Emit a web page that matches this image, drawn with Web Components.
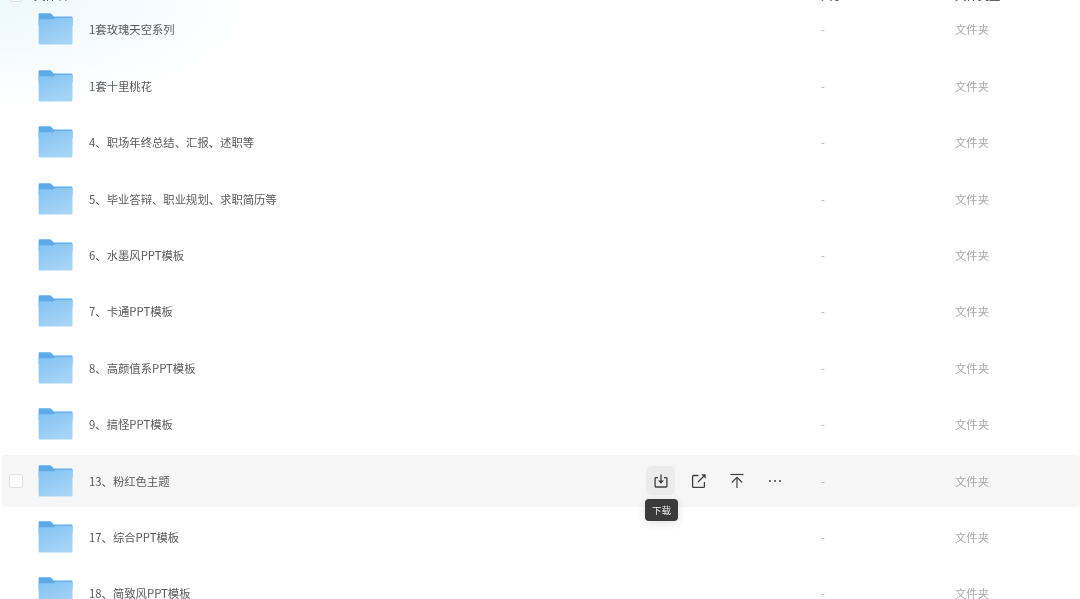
<!DOCTYPE html>
<html lang="zh">
<head>
<meta charset="utf-8">
<title>文件列表</title>
<style>
    html, body { margin: 0; height: 100%; overflow: hidden; background: #fff; }
    body { font-family: "Noto Sans CJK SC", "Noto Sans", sans-serif; }
</style>
</head>
<body>
<file-list>
    <file-row name="1套玫瑰天空系列"></file-row>
    <file-row name="1套十里桃花"></file-row>
    <file-row name="4、职场年终总结、汇报、述职等"></file-row>
    <file-row name="5、毕业答辩、职业规划、求职简历等"></file-row>
    <file-row name="6、水墨风PPT模板"></file-row>
    <file-row name="7、卡通PPT模板"></file-row>
    <file-row name="8、高颜值系PPT模板"></file-row>
    <file-row name="9、搞怪PPT模板"></file-row>
    <file-row name="13、粉红色主题" active></file-row>
    <file-row name="17、综合PPT模板"></file-row>
    <file-row name="18、简致风PPT模板"></file-row>
</file-list>

<script>
const listTemplate = document.createElement('template')
listTemplate.innerHTML = `
<style>
    :host {
        display: block;
        height: 599px;
        overflow: hidden;
        filter: blur(0.4px);
        background:
            radial-gradient(ellipse 260px 110px at 0 0, #eef9fd 0%, #f4fbfe 45%, #fbfdff 75%, #fff 100%);
    }
    .head {
        display: grid;
        grid-template-columns: 34px 787px 134px 1fr;
        align-items: center;
        height: 16px;
        margin-top: -12.6px;
        font-size: 11.35px;
        color: #333;
    }
    .box {
        width: 14px;
        height: 14px;
        margin-left: 9px;
        box-sizing: border-box;
        border: 1px solid #dedede;
        border-radius: 3px;
        background: #fff;
    }
</style>
<div class="head">
    <span class="box"></span>
    <span>文件名</span>
    <span>大小</span>
    <span>文件类型</span>
</div>
<slot></slot>
`

class FileList extends HTMLElement {
    constructor() {
        super()
        this.attachShadow({ mode: 'open' }).appendChild(listTemplate.content.cloneNode(true))
    }
}

const rowTemplate = document.createElement('template')
rowTemplate.innerHTML = `
<style>
    :host {
        display: block;
        height: 56.4px;
        padding-left: 2px;
        box-sizing: border-box;
        font-size: 11.35px;
        color: #5a5a5a;
    }
    .row {
        position: relative;
        display: grid;
        grid-template-columns: 37px 50px 1fr 134px 125px;
        align-items: center;
        height: 52px;
        border-radius: 4px;
    }
    :host([active]) .row { background: #f6f6f6; }
    .check { visibility: hidden; }
    :host([active]) .check {
        visibility: visible;
        width: 14px;
        height: 14px;
        margin-left: 7px;
        box-sizing: border-box;
        border: 1px solid #e3e3e3;
        border-radius: 3px;
        background: #fff;
    }
    svg { display: block; }
    .folder { margin-left: -1px; }
    .name { display: flex; align-items: center; justify-content: space-between; min-width: 0; }
    .size, .type { color: #a8a8a8; }
    .tools { display: none; align-items: center; margin-right: 32px; }
    :host([active]) .tools { display: flex; }
    .tool {
        display: flex;
        align-items: center;
        justify-content: center;
        width: 29px;
        height: 29px;
        margin-left: 9px;
        border-radius: 6px;
        color: #3f3f3f;
    }
    .tool.on { background: #ebebeb; }
    .tip {
        position: absolute;
        left: 643px;
        top: 44px;
        width: 33px;
        height: 22px;
        display: none;
        align-items: center;
        justify-content: center;
        border-radius: 4px;
        background: #3b3b3b;
        color: #eee;
        font-size: 9.5px;
        box-shadow: 0 2px 10px rgba(0,0,0,.12);
    }
    :host([active]) .tip { display: flex; }
</style>
<div class="row">
    <span class="check"></span>
    <svg class="folder" width="35" height="32" viewBox="0 0 35 32">
        <defs>
            <linearGradient id="body" x1="0" y1="0" x2="0.5" y2="1">
                <stop offset="0" stop-color="#82c2f2"/>
                <stop offset="1" stop-color="#a5d4f6"/>
            </linearGradient>
        </defs>
        <path d="M.6 1.500C.6 .7 1.200 .2 2 .2h9.800c.6 0 1 .2 1.400.6l2.400 2.600h17.600c.8 0 1.300.6 1.300 1.300V12H.6z" fill="#5eaae8"/>
        <path d="M.6 6.200h15.200l1.800-1.400h16.900V30c0 .9-.6 1.500-1.400 1.500H2c-.8 0-1.400-.6-1.400-1.500z" fill="url(#body)"/>
    </svg>
    <div class="name">
        <span id="name"></span>
        <span class="tools">
            <span class="tool on">
                <svg width="16" height="16" viewBox="0 0 16 16" fill="none" stroke="currentColor" stroke-width="1.3">
                    <path d="M5 4.600H2.800c-.4 0-.7.3-.7.7v8c0 .4.3.7.7.7h10.400c.4 0 .7-.3.7-.7v-8c0-.4-.3-.7-.7-.7H11"/>
                    <path d="M8 1.500v6.500"/>
                    <path d="M5 7.400h6L8 10.800z" fill="currentColor" stroke="none"/>
                </svg>
            </span>
            <span class="tool">
                <svg width="16" height="16" viewBox="0 0 16 16" fill="none" stroke="currentColor" stroke-width="1.3">
                    <path d="M7.500 2.500H2.500c-.5 0-.9.400-.9.900v10c0 .5.400.9.900.9h10c.5 0 .9-.4.900-.9V9"/>
                    <path d="M7 9l6-6"/>
                    <path d="M10.200 1.300h4.500v4.500z" fill="currentColor" stroke="none"/>
                </svg>
            </span>
            <span class="tool">
                <svg width="16" height="16" viewBox="0 0 16 16" fill="none" stroke="currentColor" stroke-width="1.200">
                    <path d="M1.500 1.500h13"/>
                    <path d="M8 15V4.500"/>
                    <path d="M2.800 9.500L8 4.300l5.200 5.200"/>
                </svg>
            </span>
            <span class="tool">
                <svg width="16" height="16" viewBox="0 0 16 16" fill="currentColor">
                    <circle cx="3" cy="8" r="1"/><circle cx="8" cy="8" r="1"/><circle cx="13" cy="8" r="1"/>
                </svg>
            </span>
        </span>
    </div>
    <span class="size">-</span>
    <span class="type">文件夹</span>
    <span class="tip">下载</span>
</div>
`

class FileRow extends HTMLElement {
    constructor() {
        super()
        this._shadowRoot = this.attachShadow({ mode: 'open' })
        this._shadowRoot.appendChild(rowTemplate.content.cloneNode(true))
    }

    connectedCallback() {
        this._shadowRoot.querySelector('#name').textContent = this.getAttribute('name')
    }
}

window.customElements.define('file-list', FileList)
window.customElements.define('file-row', FileRow)
</script>
</body>
</html>
